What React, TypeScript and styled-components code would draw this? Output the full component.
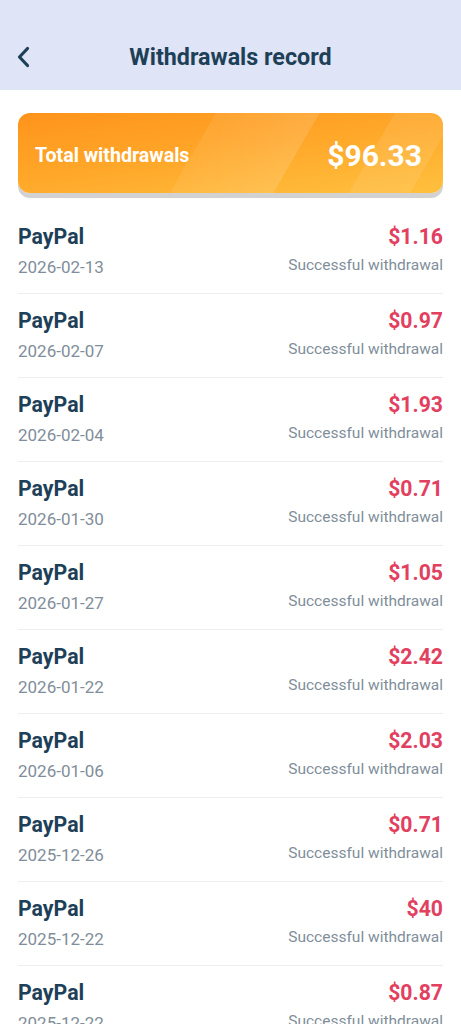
import React from "react";
import styled, { createGlobalStyle } from "styled-components";

const Global = createGlobalStyle`
  html, body { margin: 0; padding: 0; background: #ffffff; }
  body { font-family: Roboto, "Noto Sans", "Liberation Sans", sans-serif; }
  * { box-sizing: border-box; }
`;

const Page = styled.div`
  width: 461px;
  height: 1024px;
  background: #ffffff;
  overflow: hidden;
`;

const Header = styled.header`
  height: 90px;
  background: #dfe4f6;
  display: grid;
  grid-template-columns: 60px 1fr 60px;
  align-items: center;
  padding-top: 24px;
`;

const BackButton = styled.button`
  border: 0;
  background: transparent;
  padding: 0 0 0 15px;
  display: flex;
  align-items: center;
  height: 30px;
  cursor: pointer;
`;

const Title = styled.h1`
  margin: 0;
  text-align: center;
  font-size: 23.3px;
  font-weight: 700;
  color: #1e3f58;
`;

const Content = styled.main`
  padding: 23px 18px 0;
`;

const TotalCard = styled.section`
  position: relative;
  height: 80px;
  border-radius: 12px;
  background: linear-gradient(172deg, #ff931c 0%, #ffa82a 50%, #ffc03e 100%);
  box-shadow: 0 5px 0 #d2d2d2;
  display: flex;
  align-items: center;
  justify-content: space-between;
  padding: 5px 21px 0 17px;
  overflow: hidden;
`;

const Shine = styled.div`
  position: absolute;
  inset: 0;
  background: linear-gradient(
    120deg,
    transparent 0%,
    transparent 42%,
    rgba(255, 255, 255, 0.07) 42%,
    rgba(255, 255, 255, 0.13) 64%,
    transparent 64%,
    transparent 80%,
    rgba(255, 255, 255, 0.09) 80%,
    rgba(255, 255, 255, 0.09) 93%,
    transparent 93%
  );
  pointer-events: none;
`;

const TotalLabel = styled.span`
  position: relative;
  color: #ffffff;
  font-size: 19.6px;
  font-weight: 700;
`;

const TotalValue = styled.span`
  position: relative;
  color: #ffffff;
  font-size: 30px;
  font-weight: 700;
`;

const List = styled.ul`
  list-style: none;
  margin: 17px 0 0;
  padding: 0;
`;

const Row = styled.li`
  height: 84px;
  display: flex;
  justify-content: space-between;
  border-bottom: 1px solid #eceef1;
  padding-top: 15px;
`;

const Col = styled.div<{ $align: "left" | "right" }>`
  display: flex;
  flex-direction: column;
  align-items: ${(p) => (p.$align === "left" ? "flex-start" : "flex-end")};
`;

const Method = styled.span`
  font-size: 21.3px;
  font-weight: 700;
  color: #1e3f58;
  line-height: 24px;
`;

const DateText = styled.span`
  margin-top: 8px;
  font-size: 17px;
  color: #7f8e9a;
  line-height: 20px;
`;

const Amount = styled.span`
  font-size: 21.2px;
  font-weight: 700;
  color: #e2405f;
  line-height: 24px;
`;

const Status = styled.span`
  margin-top: 6px;
  font-size: 15.5px;
  color: #7f8e9a;
  line-height: 20px;
`;

const records = [
  { date: "2026-02-13", amount: "$1.16" },
  { date: "2026-02-07", amount: "$0.97" },
  { date: "2026-02-04", amount: "$1.93" },
  { date: "2026-01-30", amount: "$0.71" },
  { date: "2026-01-27", amount: "$1.05" },
  { date: "2026-01-22", amount: "$2.42" },
  { date: "2026-01-06", amount: "$2.03" },
  { date: "2025-12-26", amount: "$0.71" },
  { date: "2025-12-22", amount: "$40" },
  { date: "2025-12-22", amount: "$0.87" },
];

export default function App() {
  return (
    <Page>
      <Global />
      <Header>
        <BackButton aria-label="Back">
          <svg width="16" height="24" viewBox="0 0 16 24" fill="none">
            <path d="M12.5 3.5 L4.5 12 L12.5 20.5" stroke="#1e3f58" strokeWidth="3.2" strokeLinecap="round" strokeLinejoin="round" />
          </svg>
        </BackButton>
        <Title>Withdrawals record</Title>
        <span />
      </Header>
      <Content>
        <TotalCard>
          <Shine />
          <TotalLabel>Total withdrawals</TotalLabel>
          <TotalValue>$96.33</TotalValue>
        </TotalCard>
        <List>
          {records.map((r, i) => (
            <Row key={i}>
              <Col $align="left">
                <Method>PayPal</Method>
                <DateText>{r.date}</DateText>
              </Col>
              <Col $align="right">
                <Amount>{r.amount}</Amount>
                <Status>Successful withdrawal</Status>
              </Col>
            </Row>
          ))}
        </List>
      </Content>
    </Page>
  );
}
